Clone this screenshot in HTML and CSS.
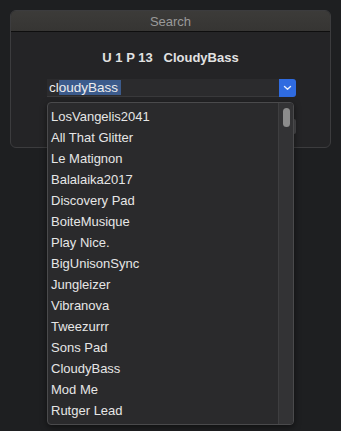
FILE: index.html
```html
<!DOCTYPE html>
<html lang="en">
<head>
    <meta charset="UTF-8">
    <meta name="viewport" content="width=device-width, initial-scale=1.0">
    <title>Search</title>
    <link rel="stylesheet" href="styles.css">
</head>
<body>
    <div class="dialog">
        <div class="titlebar">Search</div>
        <div class="header">U 1 P 13&nbsp;&nbsp;&nbsp;CloudyBass</div>
        <div class="combo">
            <div class="field">cl<span class="sel">oudyBass</span></div>
            <div class="combo-btn">
                <svg width="9" height="6" viewBox="0 0 9 6"><path d="M1.5 1.5 L4.5 4.2 L7.5 1.5" fill="none" stroke="#e8eefc" stroke-width="1.4" stroke-linecap="round" stroke-linejoin="round"/></svg>
            </div>
            <div class="peek"></div>
            <div class="dropdown">
                <ul class="items">
                    <li>LosVangelis2041</li>
                    <li>All That Glitter</li>
                    <li>Le Matignon</li>
                    <li>Balalaika2017</li>
                    <li>Discovery Pad</li>
                    <li>BoiteMusique</li>
                    <li>Play Nice.</li>
                    <li>BigUnisonSync</li>
                    <li>Jungleizer</li>
                    <li>Vibranova</li>
                    <li>Tweezurrr</li>
                    <li>Sons Pad</li>
                    <li>CloudyBass</li>
                    <li>Mod Me</li>
                    <li>Rutger Lead</li>
                </ul>
                <div class="scrollbar"><div class="thumb"></div></div>
            </div>
        </div>
    </div>
</body>
</html>
```

FILE: styles.css
```css
html, body {
    height: 100%;
}
body {
    margin: 0;
    background: #1e1f21;
    font-family: "Liberation Sans", Arial, sans-serif;
    font-size: 13px;
    color: #e4e4e4;
    padding-top: 10px;
    box-sizing: border-box;
}
.dialog {
    margin-left: 10px;
    width: 319px;
    height: 136px;
    background: #242426;
    border: 1px solid #3c3c3e;
    border-radius: 6px;
}
.titlebar {
    height: 20px;
    line-height: 21px;
    text-align: center;
    color: #9a9a9a;
    background: linear-gradient(#3c3b39, #363533);
    border-bottom: 1px solid #0e0e0e;
    border-radius: 5px 5px 0 0;
}
.header {
    margin-top: 18px;
    line-height: 16px;
    text-align: center;
    font-weight: bold;
    color: #e2e2e2;
}
.combo {
    position: relative;
    margin: 13px 0 0 36px;
    width: 249px;
    height: 18px;
    display: flex;
}
.field {
    flex: 1;
    background: #2b2b2d;
    border-bottom: 1px solid #3a3a3c;
    padding-left: 2px;
    line-height: 18px;
    font-size: 13.5px;
    color: #ececec;
}
.sel {
    background: #3c5b8c;
    padding-right: 3px;
}
.combo-btn {
    width: 17px;
    height: 18px;
    background: #2f6be0;
    border-radius: 0 3px 3px 0;
    display: flex;
    align-items: center;
    justify-content: center;
}
.peek {
    position: absolute;
    left: 246px;
    top: 40px;
    width: 3px;
    height: 15px;
    background: #4a4a4c;
    border-radius: 0 2px 2px 0;
}
.dropdown {
    position: absolute;
    left: 0;
    top: 23px;
    width: 245px;
    height: 321px;
    background: #2a2a2c;
    border: 1px solid #4a4a4c;
    border-radius: 4px;
    box-shadow: 0 2px 6px rgba(0, 0, 0, 0.5);
    display: flex;
    overflow: hidden;
}
.items {
    flex: 1;
    list-style: none;
    margin: 0;
    padding: 3px 0 0 3px;
}
.items li {
    height: 21px;
    line-height: 21px;
    color: #e6e6e6;
}
.scrollbar {
    width: 14px;
    background: #333335;
    border-left: 1px solid #3e3e40;
    display: flex;
    justify-content: center;
    padding-top: 5px;
}
.thumb {
    width: 7px;
    height: 19px;
    background: #8c8c8c;
    border-radius: 4px;
}
```
